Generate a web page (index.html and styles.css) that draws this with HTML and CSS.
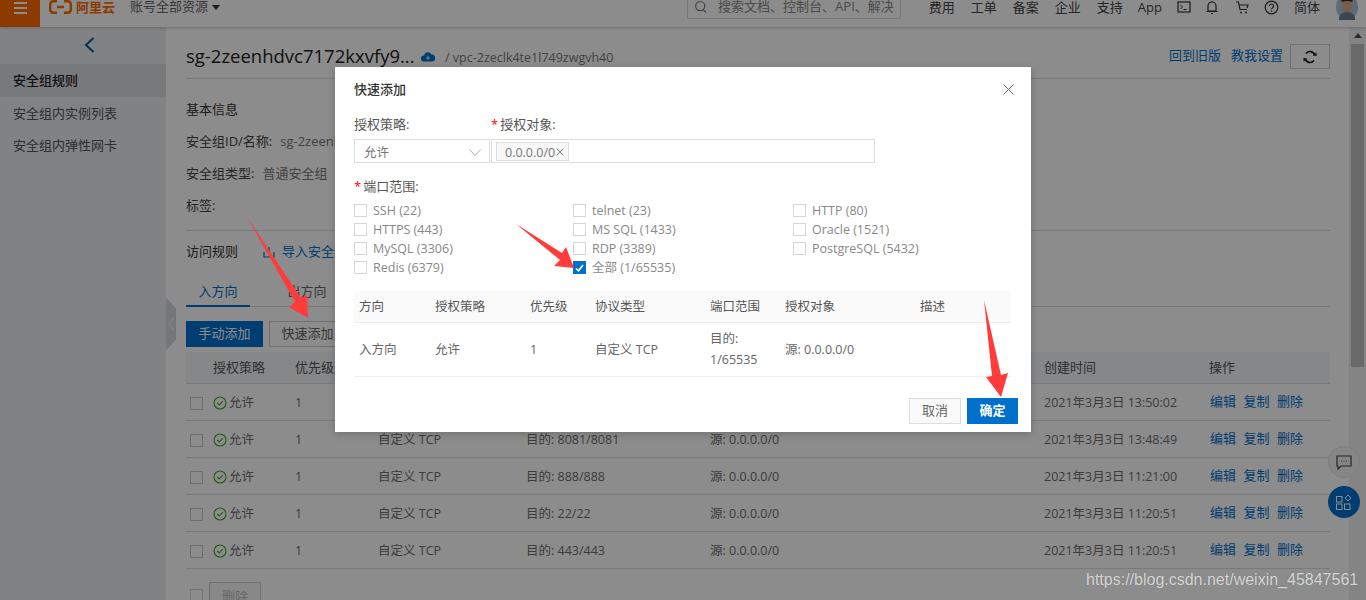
FILE: index.html
```html
<!DOCTYPE html>
<html lang="zh-CN">
<head>
<meta charset="utf-8">
<title>安全组规则</title>
<link rel="stylesheet" href="styles.css">
</head>
<body>
<div class="page">
  <header class="topbar">
    <div class="menu-btn"><span></span><span></span><span></span></div>
    <div class="logo">
      <svg class="logo-mark" width="23" height="14" viewBox="0 0 23 14"><path d="M8 1.2H4.5Q1.2 1.2 1.2 4.5V9.500Q1.200 12.800 4.500 12.800H8M15 1.200H18.500Q21.800 1.200 21.800 4.500V9.500Q21.800 12.800 18.500 12.800H15M8 7H15" fill="none" stroke="#ff6a00" stroke-width="2.400"/></svg>
      <span>阿里云</span>
    </div>
    <div class="account">账号全部资源<i class="caret"></i></div>
    <div class="top-right">
      <div class="search">
        <svg width="14" height="14" viewBox="0 0 14 14"><circle cx="6.500" cy="6" r="4.800" fill="none" stroke="#777" stroke-width="1.200"/><path d="M10 10l2.500 3" stroke="#777" stroke-width="1.200"/></svg>
        <span>搜索文档、控制台、API、解决</span>
      </div>
      <nav class="topnav">
        <span>费用</span><span>工单</span><span>备案</span><span>企业</span><span>支持</span><span class="app">App</span>
        <svg width="14" height="14" viewBox="0 0 14 14"><rect x="1" y="2" width="12" height="10" fill="none" stroke="#333" stroke-width="1.200"/><path d="M3.500 5l2 2-2 2M6.500 9.500h3" fill="none" stroke="#333"/></svg>
        <svg width="14" height="15" viewBox="0 0 14 15"><path d="M3 11V6a4 4 0 0 1 8 0v5zM1.500 11.500h11M6 13.500h2M7 1v1" fill="none" stroke="#333" stroke-width="1.200"/></svg>
        <svg width="15" height="15" viewBox="0 0 15 15"><path d="M1 2h2.500l1.500 7.500h7M4 5h9l-1 3" fill="none" stroke="#333" stroke-width="1.200"/><circle cx="6" cy="12.500" r="1" fill="#333"/><circle cx="11" cy="12.500" r="1" fill="#333"/></svg>
        <svg width="15" height="15" viewBox="0 0 15 15"><circle cx="7.500" cy="7.500" r="6.300" fill="none" stroke="#333" stroke-width="1.200"/><path d="M5.500 6a2 2 0 1 1 3 1.700c-.7.400-1 .8-1 1.600" fill="none" stroke="#333" stroke-width="1.100"/><circle cx="7.500" cy="11" r=".8" fill="#333"/></svg>
        <span class="lang">简体</span>
      </nav>
      <svg class="avatar" width="22" height="24" viewBox="0 0 22 24"><ellipse cx="11" cy="11" rx="11" ry="13" fill="#a9c3d6"/><ellipse cx="11" cy="8" rx="5" ry="8.500" fill="#d9a888"/><path d="M5.500 4q5-6 11 0v2q-5-2-11 0z" fill="#3a2a20"/><path d="M3 24q0-8 8-8t8 8z" fill="#6a7f93"/></svg>
    </div>
  </header>

  <div class="body-row">
    <aside class="sidebar">
      <div class="side-back"><svg width="11" height="16" viewBox="0 0 11 16"><path d="M9.500 1L2 8l7.500 7" fill="none" stroke="#0a5a9c" stroke-width="2"/></svg></div>
      <div class="side-item active">安全组规则</div>
      <div class="side-item">安全组内实例列表</div>
      <div class="side-item">安全组内弹性网卡</div>
    </aside>

    <main class="main">
      <div class="title-row">
        <h1>sg-2zeenhdvc7172kxvfy9...</h1>
        <svg class="cloud" width="14" height="10" viewBox="0 0 14 10"><path d="M3 9.500a3 3 0 0 1 0-6 4 4 0 0 1 7.500-1A3.500 3.500 0 0 1 11 9.500z" fill="#0070cc"/><path d="M7 3.500v3.500M5.300 5.500L7 7.500 8.700 5.500" stroke="#fff" fill="none"/></svg>
        <span class="vpc">/ vpc-2zeclk4te1l749zwgvh40</span>
        <div class="title-actions">
          <a>回到旧版</a><a>教我设置</a>
          <button class="refresh"><svg width="14" height="14" viewBox="0 0 14 14"><path d="M11.800 5.200A5 5 0 0 0 3 3.500M2.200 8.800A5 5 0 0 0 11 10.500" fill="none" stroke="#222" stroke-width="1.700"/><path d="M9.800 5.500L13.500 6V2.200zM4.200 8.500L.5 8V11.800z" fill="#222"/></svg></button>
        </div>
      </div>
      <div class="info">
        <div class="info-head">基本信息</div>
        <div class="info-row">安全组ID/名称:<span>sg-2zeenhdvc7172kxvfy9</span></div>
        <div class="info-row">安全组类型:<span>普通安全组</span></div>
        <div class="info-row">标签:</div>
      </div>
      <div class="rules-head">
        <span class="rules-title">访问规则</span>
        <a class="import"><svg width="12" height="12" viewBox="0 0 12 12"><path d="M1 6v5h10V6M6 1v7" fill="none" stroke="#0070cc" stroke-width="1.200"/></svg>导入安全组规则</a>
      </div>
      <div class="tabs"><span class="tab active">入方向</span><span class="tab">出方向</span></div>
      <div class="toolbar"><button class="btn primary">手动添加</button><button class="btn">快速添加</button></div>

      <table class="rules">
        <colgroup><col class="c0"><col class="c1"><col class="c2"><col class="c3"><col class="c4"><col class="c5"><col class="c6"><col class="c7"></colgroup>
        <thead><tr><th></th><th>授权策略</th><th>优先级</th><th>协议类型</th><th>端口范围</th><th>授权对象</th><th>创建时间</th><th>操作</th></tr></thead>
        <tbody>
          <tr><td><i class="box"></i></td><td><svg class="ok" width="14" height="14" viewBox="0 0 14 14"><circle cx="7" cy="7" r="6" fill="none" stroke="#3fa81e" stroke-width="1.100"/><path d="M4.300 7l2 2 3.500-3.800" fill="none" stroke="#3fa81e" stroke-width="1.100"/></svg>允许</td><td>1</td><td>自定义 TCP</td><td>目的: 80/80</td><td>源: 0.0.0.0/0</td><td>2021年3月3日 13:50:02</td><td class="ops"><a>编辑</a><a>复制</a><a>删除</a></td></tr>
          <tr><td><i class="box"></i></td><td><svg class="ok" width="14" height="14" viewBox="0 0 14 14"><circle cx="7" cy="7" r="6" fill="none" stroke="#3fa81e" stroke-width="1.100"/><path d="M4.300 7l2 2 3.500-3.800" fill="none" stroke="#3fa81e" stroke-width="1.100"/></svg>允许</td><td>1</td><td>自定义 TCP</td><td>目的: 8081/8081</td><td>源: 0.0.0.0/0</td><td>2021年3月3日 13:48:49</td><td class="ops"><a>编辑</a><a>复制</a><a>删除</a></td></tr>
          <tr><td><i class="box"></i></td><td><svg class="ok" width="14" height="14" viewBox="0 0 14 14"><circle cx="7" cy="7" r="6" fill="none" stroke="#3fa81e" stroke-width="1.100"/><path d="M4.300 7l2 2 3.500-3.800" fill="none" stroke="#3fa81e" stroke-width="1.100"/></svg>允许</td><td>1</td><td>自定义 TCP</td><td>目的: 888/888</td><td>源: 0.0.0.0/0</td><td>2021年3月3日 11:21:00</td><td class="ops"><a>编辑</a><a>复制</a><a>删除</a></td></tr>
          <tr><td><i class="box"></i></td><td><svg class="ok" width="14" height="14" viewBox="0 0 14 14"><circle cx="7" cy="7" r="6" fill="none" stroke="#3fa81e" stroke-width="1.100"/><path d="M4.300 7l2 2 3.500-3.800" fill="none" stroke="#3fa81e" stroke-width="1.100"/></svg>允许</td><td>1</td><td>自定义 TCP</td><td>目的: 22/22</td><td>源: 0.0.0.0/0</td><td>2021年3月3日 11:20:51</td><td class="ops"><a>编辑</a><a>复制</a><a>删除</a></td></tr>
          <tr><td><i class="box"></i></td><td><svg class="ok" width="14" height="14" viewBox="0 0 14 14"><circle cx="7" cy="7" r="6" fill="none" stroke="#3fa81e" stroke-width="1.100"/><path d="M4.300 7l2 2 3.500-3.800" fill="none" stroke="#3fa81e" stroke-width="1.100"/></svg>允许</td><td>1</td><td>自定义 TCP</td><td>目的: 443/443</td><td>源: 0.0.0.0/0</td><td>2021年3月3日 11:20:51</td><td class="ops"><a>编辑</a><a>复制</a><a>删除</a></td></tr>
        </tbody>
      </table>
      <div class="bulk"><i class="box"></i><button class="btn disabled">删除</button></div>
    </main>

    <div class="scrollbar"><div class="scroll-up"></div><div class="scroll-thumb"></div></div>
  </div>

  <div class="handle"><svg width="6" height="12" viewBox="0 0 6 12"><path d="M5.500 .5L.8 6l4.700 5.500" fill="none" stroke="#fff" stroke-width="1"/></svg></div>
  <div class="fab chat"><svg width="16" height="15" viewBox="0 0 16 15"><path d="M1 1h14v10H5l-3 3v-3H1z" fill="none" stroke="#444" stroke-width="1.200"/><path d="M5 6h1M7.500 6h1M10 6h1" stroke="#444" stroke-width="1.200"/></svg></div>
  <div class="fab apps"><svg width="16" height="16" viewBox="0 0 16 16"><g fill="none" stroke="#fff" stroke-width="1"><rect x=".5" y="2.500" width="5.500" height="5.500"/><rect x=".5" y="10" width="5.500" height="5.500"/><rect x="8.500" y="10" width="5.500" height="5.500"/><path d="M12 1l3 3-3 3-3-3z"/></g></svg></div>

  <div class="overlay"></div>

  <section class="modal">
    <svg class="close" width="11" height="11" viewBox="0 0 11 11"><path d="M.500 .500l10 10M10.500 .500l-10 10" stroke="#666" stroke-width="1"/></svg>
    <h2>快速添加</h2>
    <div class="form-labels">
      <label class="lab-policy">授权策略:</label>
      <label class="lab-target"><b>*</b>授权对象:</label>
    </div>
    <div class="form-fields">
      <div class="select"><span>允许</span><svg width="12" height="7" viewBox="0 0 12 7"><path d="M.500 .500L6 6.500 11.500 .500" fill="none" stroke="#aaa"/></svg></div>
      <div class="tags"><span class="tag"><span>0.0.0.0/0</span><svg width="8" height="8" viewBox="0 0 8 8"><path d="M.500 .500l7 7M7.500 .500l-7 7" stroke="#888"/></svg></span></div>
    </div>
    <label class="lab-port"><b>*</b>端口范围:</label>
    <div class="ports">
      <div class="port"><i class="box"></i>SSH (22)</div><div class="port"><i class="box"></i>telnet (23)</div><div class="port"><i class="box"></i>HTTP (80)</div>
      <div class="port"><i class="box"></i>HTTPS (443)</div><div class="port"><i class="box"></i>MS SQL (1433)</div><div class="port"><i class="box"></i>Oracle (1521)</div>
      <div class="port"><i class="box"></i>MySQL (3306)</div><div class="port"><i class="box"></i>RDP (3389)</div><div class="port"><i class="box"></i>PostgreSQL (5432)</div>
      <div class="port"><i class="box"></i>Redis (6379)</div>
      <div class="port"><i class="box checked"><svg width="9" height="8" viewBox="0 0 9 8"><path d="M1 4.500L3.500 6.800 8 1" fill="none" stroke="#fff" stroke-width="1.600"/></svg></i>全部 (1/65535)</div>
    </div>
    <table class="preview">
      <colgroup><col class="p0"><col class="p1"><col class="p2"><col class="p3"><col class="p4"><col class="p5"><col class="p6"></colgroup>
      <thead><tr><th>方向</th><th>授权策略</th><th>优先级</th><th>协议类型</th><th>端口范围</th><th>授权对象</th><th>描述</th></tr></thead>
      <tbody><tr><td>入方向</td><td>允许</td><td>1</td><td>自定义 TCP</td><td>目的:<br>1/65535</td><td>源: 0.0.0.0/0</td><td></td></tr></tbody>
    </table>
    <div class="modal-foot"><button class="mbtn">取消</button><button class="mbtn ok-btn">确定</button></div>
  </section>

  <svg class="arrows" width="1366" height="600" viewBox="0 0 1366 600">
    <g fill="#ff3b3b">
      <polygon points="247,217 301,298 307,295 308,318 289,307 295,302"/>
      <polygon points="516,224 562,253 566,247 574,268 554,266 560,260"/>
      <polygon points="984,300 1001,375 1008,373 1001,397 986,377 992,376"/>
    </g>
  </svg>
  <div class="watermark">https://blog.csdn.net/weixin_45847561</div>
</div>
</body>
</html>
```
FILE: styles.css
```css
* { box-sizing: border-box; }
html, body { margin: 0; height: 600px; overflow: hidden; }
body { font: 13px/1.2 "Open Sans", "Noto Sans CJK SC", sans-serif; color: #333; background: #fff; }
.page { position: relative; width: 1366px; height: 600px; overflow: hidden; }
a { color: #0070cc; }
i { font-style: normal; }
button { font: inherit; }

/* top bar */
.topbar { height: 27px; display: flex; align-items: center; background: #fff; position: relative; box-shadow: 0 1px 3px rgba(0,0,0,.2); }
.menu-btn { width: 40px; height: 27px; background: #ff6a00; display: flex; flex-direction: column; justify-content: center; align-items: center; gap: 3px; padding-bottom: 12px; padding-top: 1px; }
.menu-btn span { width: 13px; height: 2px; background: #fff; }
.logo { display: flex; align-items: center; gap: 4px; margin-left: 9px; color: #ff6a00; font-weight: 700; font-size: 13px; padding-bottom: 13px; height: 27px; }
.logo span { line-height: 14px; }
.account { margin-left: 15px; display: flex; align-items: center; color: #666; padding-bottom: 13px; height: 27px; }
.caret { width: 0; height: 0; border: 4.500px solid transparent; border-top: 5px solid #333; border-bottom: 0; margin-left: 4px; }
.top-right { margin-left: auto; display: flex; align-items: flex-start; height: 27px; }
.search { width: 214px; height: 19px; border: 1px solid #ddd; border-top: 0; display: flex; align-items: center; padding: 0 6px 4px 6px; gap: 11px; color: #888; font-size: 13px; white-space: nowrap; overflow: hidden; }
.topnav { display: flex; align-items: center; gap: 16px; margin-left: 28px; height: 14px; color: #444; font-size: 13px; }
.topnav span { line-height: 14px; }
.topnav .app { margin-left: -1px; }
.topnav svg:nth-of-type(1) { margin-left: -1px; }
.topnav svg:nth-of-type(2) { margin-left: -2px; }
.topnav svg:nth-of-type(4) { margin-left: -2px; }
.topnav .lang { margin-left: -1px; }
.avatar { margin: -4px 8px 0 16px; }

/* body */
.body-row { display: flex; height: 573px; }
.sidebar { width: 166px; background: #eaedf1; flex: none; }
.side-back { height: 37px; display: flex; align-items: center; justify-content: center; padding: 0 0 2px 13px; }
.side-item { height: 32px; line-height: 32px; padding-left: 13px; color: #555; }
.side-item.active { background: #d9dce0; color: #222; font-weight: 500; height: 33px; line-height: 33px; }
.main { width: 1183px; padding: 0 19px 0 20px; flex: none; }

.title-row { height: 52px; display: flex; align-items: center; border-bottom: 1px solid #ddd; padding-top: 6px; }
.title-row h1 { margin: 0; font-size: 18.500px; font-weight: 400; color: #222; line-height: 26px; width: 229px; white-space: nowrap; }
.cloud { margin: 2px 0 0 6px; }
.vpc { margin: 3px 0 0 10px; color: #777; font-size: 12.500px; }
.title-actions { margin-left: auto; display: flex; align-items: center; gap: 10px; margin-top: 1px; }
.refresh { width: 40px; height: 25px; margin-left: -3px; border: 1px solid #ccc; background: #fff; display: flex; align-items: center; justify-content: center; padding: 2px 0 0; }

.info { height: 152px; border-bottom: 1px solid #ddd; padding-top: 14px; }
.info-head { height: 32px; line-height: 32px; color: #333; margin-top: 0; }
.info-row { height: 32px; line-height: 32px; color: #444; }
.info-row span { color: #777; margin-left: 8px; font-size: 13px; }

.rules-head { height: 40px; display: flex; align-items: center; gap: 20px; padding-top: 2px; }
.rules-title { color: #333; }
.import { display: flex; align-items: center; gap: 7px; margin-left: 5px; }
.tabs { height: 36px; border-bottom: 1px solid #ddd; display: flex; align-items: center; color: #666; }
.tab { width: 64px; height: 36px; line-height: 40px; text-align: center; margin-right: 25px; }
.tab.active { color: #0070cc; border-bottom: 2px solid #0070cc; }
.toolbar { display: flex; gap: 6px; margin-top: 14px; height: 31px; align-items: flex-start; }
.btn { height: 26px; padding: 0; width: 77px; border: 1px solid #ccc; background: #fff; color: #666; font-size: 13px; }
.btn.primary { background: #0070cc; border-color: #0070cc; color: #fff; }
.btn.disabled { width: 52px; height: 30px; background: #f7f7f7; color: #bbb; }

.rules { width: 1144px; table-layout: fixed; border-collapse: collapse; }
.c0 { width: 27px; } .c1 { width: 82px; } .c2 { width: 83px; } .c3 { width: 148px; }
.c4 { width: 184px; } .c5 { width: 334px; } .c6 { width: 165px; } .c7 { width: 121px; }
.rules th { height: 31px; background: #f5f6f7; font-weight: 400; text-align: left; color: #555; padding: 1px 0 0; border-bottom: 1px solid #ddd; }
.rules td { height: 37px; padding: 1px 0 0; color: #6e6e6e; border-bottom: 1px solid #ddd; white-space: nowrap; font-size: 12.500px; }
.rules td:first-child { padding-left: 4px; }
.rules .ok { vertical-align: -3px; margin-right: 2px; }
.rules .ops { font-size: 13px; padding-left: 1px; }
.rules .ops a { margin-right: 7.500px; }
.box { display: inline-block; width: 13px; height: 13px; border: 1px solid #d4d6dc; background: #fff; vertical-align: middle; }
.rules .box { border-color: #c4c6cf; }
.bulk { display: flex; align-items: flex-start; gap: 6px; padding: 13px 0 0 4px; }
.bulk .box { margin-top: 7px; }

.scrollbar { width: 17px; flex: none; background: #f1f1f1; padding: 6px 2px 0; }
.scroll-up { width: 0; height: 0; border: 4px solid transparent; border-bottom: 5px solid #505050; border-top: 0; margin: 0 auto 6px; }
.scroll-thumb { height: 323px; background: #c1c1c1; }

/* overlays */
.handle { position: absolute; left: 166px; top: 298px; width: 10px; height: 52px; background: #d4d7dc; clip-path: polygon(0 0, 100% 10px, 100% 42px, 0 100%); display: flex; align-items: center; justify-content: center; }
.fab { position: absolute; left: 1328px; width: 32px; height: 32px; border-radius: 50%; display: flex; align-items: center; justify-content: center; }
.fab.chat { top: 446px; background: #f4f4f4; border: 1px solid #e4e4e4; }
.fab.apps { top: 486px; background: #0070cc; }
.overlay { position: absolute; inset: 0; background: rgba(0,0,0,.45); }
.arrows { position: absolute; left: 0; top: 0; pointer-events: none; }
.watermark { position: absolute; left: 1086px; top: 571px; font: 16px/18px "Liberation Sans", sans-serif; color: rgba(255,255,255,.72); text-shadow: 0 0 1px rgba(0,0,0,.25); white-space: nowrap; }

/* modal */
.modal { position: absolute; left: 335px; top: 67px; width: 696px; height: 365px; background: #fff; padding: 0 20px 0 19px; box-shadow: 0 2px 8px rgba(0,0,0,.2); color: #555; }
.close { position: absolute; right: 17px; top: 17px; }
.modal h2 { margin: 0; padding-top: 14px; height: 47px; font-size: 13px; font-weight: 500; line-height: 17px; color: #333; }
.modal b { color: #f00; font-weight: 400; margin-right: 2px; }
.form-labels { display: flex; height: 25px; }
.lab-policy { width: 137px; line-height: 20px; }
.lab-target { line-height: 20px; }
.form-fields { display: flex; height: 24px; gap: 1px; width: 521px; }
.select { width: 136px; height: 24px; border: 1px solid #dcdee3; display: flex; align-items: center; justify-content: space-between; padding: 2px 8px 0 9px; color: #777; font-size: 12.500px; }
.tags { flex: 1; height: 24px; border: 1px solid #dcdee3; padding: 2px 4px; }
.tag { display: inline-flex; align-items: center; gap: 1px; height: 19px; width: 73px; border: 1px solid #dcdee3; background: #f7f7f7; padding: 1px 0 0 8px; color: #777; font-size: 12.500px; }
.lab-port { display: block; margin-top: 13px; height: 25px; line-height: 20px; }
.ports { display: grid; grid-template-columns: 219px 220px 220px; grid-auto-rows: 19px; width: 660px; color: #888; font-size: 12.500px; }
.port { display: flex; align-items: center; gap: 6px; white-space: nowrap; }
.box.checked { background: #0070cc; border-color: #0070cc; display: flex; align-items: center; justify-content: center; }
.port .box { flex: none; }
.preview { width: 657px; margin-top: 14px; table-layout: fixed; border-collapse: collapse; font-size: 12.500px; }
.p0 { width: 81px; } .p1 { width: 95px; } .p2 { width: 65px; } .p3 { width: 115px; } .p4 { width: 75px; } .p5 { width: 135px; } .p6 { width: 91px; }
.preview th { height: 31px; background: #fafafa; border-bottom: 1px solid #eee; text-align: left; font-weight: 400; padding: 0 0 0 5px; color: #555; }
.preview th + th, .preview td + td { padding-left: 0; }
.preview td { height: 54px; border-bottom: 1px solid #eee; padding: 0 0 0 5px; line-height: 21px; color: #666; white-space: nowrap; }
.modal-foot { display: flex; justify-content: flex-end; gap: 6px; margin-top: 21px; width: 664px; }
.mbtn { width: 52px; height: 26px; border: 1px solid #ddd; background: #fafafa; color: #666; font-size: 13px; padding: 0; }
.ok-btn { width: 51px; background: #0070cc; border-color: #0070cc; color: #fff; font-weight: 700; }
```
